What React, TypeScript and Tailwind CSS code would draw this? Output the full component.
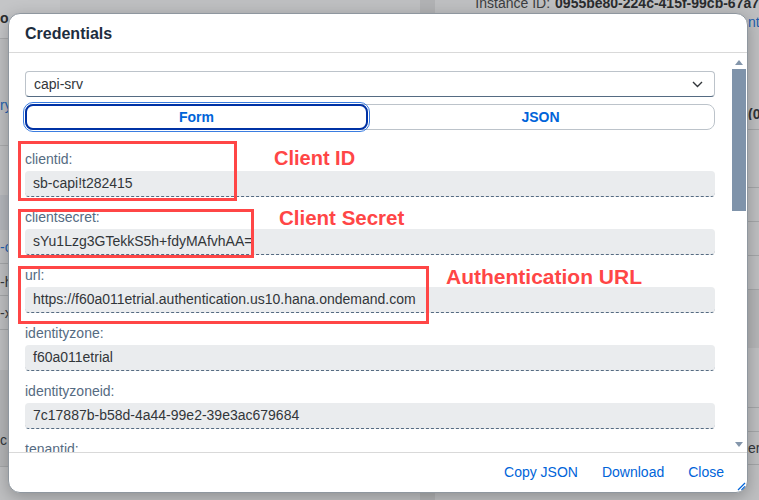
import React from "react";

const fields = [
  { label: "clientid:", value: "sb-capi!t282415" },
  { label: "clientsecret:", value: "sYu1Lzg3GTekkS5h+fdyMAfvhAA=" },
  { label: "url:", value: "https://f60a011etrial.authentication.us10.hana.ondemand.com" },
  { label: "identityzone:", value: "f60a011etrial" },
  { label: "identityzoneid:", value: "7c17887b-b58d-4a44-99e2-39e3ac679684" },
  { label: "tenantid:", value: "f60a011etrial" },
];

function Annotation({ index }: { index: number }) {
  if (index === 0)
    return (
      <>
        <div className="absolute left-[-7px] top-[-10px] w-[219px] h-[60px] border-[3px] border-[#ff4646] pointer-events-none" />
        <span className="absolute left-[249px] top-[-5px] text-[20px] leading-6 font-bold text-[#ff4646]">Client ID</span>
      </>
    );
  if (index === 1)
    return (
      <>
        <div className="absolute left-[-7px] top-0 w-[236px] h-[49px] border-[3px] border-[#ff4646] pointer-events-none" />
        <span className="absolute left-[254px] top-[-3px] text-[20.5px] leading-6 font-bold text-[#ff4646]">Client Secret</span>
      </>
    );
  if (index === 2)
    return (
      <>
        <div className="absolute left-[-7px] top-[-1px] w-[411px] h-[58px] border-[3px] border-[#ff4646] pointer-events-none" />
        <span className="absolute left-[421px] top-[-2px] text-[21px] leading-6 font-bold text-[#ff4646]">Authentication URL</span>
      </>
    );
  return null;
}

function Field({ label, value, index }: { label: string; value: string; index: number }) {
  return (
    <div className="relative flex flex-col">
      <span className="h-4 text-[14px] leading-4 text-[#556b82]">{label}</span>
      <div className="mt-1 h-[26px] flex items-center px-2 bg-[#eaecee] rounded-[4px] border-b border-dashed border-[#556b82] text-[14px] text-[#32363a]">
        {value}
      </div>
      <Annotation index={index} />
    </div>
  );
}

function Background() {
  return (
    <div className="flex h-full text-[14px] text-[#32363a]">
      <div className="w-[60px] flex flex-col">
        <div className="h-[38px] bg-[#c4c5c7] pt-[8px] font-bold text-[#2a2c2e]">o</div>
        <div className="h-[107px] border-t border-[#a9abad] pt-[56px] text-[#1f5fae]">ry</div>
        <div className="h-[50px] border-t border-[#a9abad]" />
        <div className="h-[35px] bg-[#b3b6bb]" />
        <div className="h-[34px] border-b border-[#a4a6a8] pt-[7px] text-[#1f5fae]">-c</div>
        <div className="h-[32px] border-b border-[#a4a6a8] pt-[8px]">-h</div>
        <div className="h-[34px] border-b border-[#a4a6a8] pt-[7px]">-x</div>
        <div className="h-[40px]" />
        <div className="h-[96px] bg-[#b4b5b7] pt-[60px]">c</div>
        <div className="flex-1 border-t border-[#a4a6a8] pl-[35px]">
          <div className="w-[55px] h-3 rounded-t-full bg-[#2f6b3e]" />
        </div>
      </div>
      <div className="flex-1" />
      <div className="w-[339px] flex">
        <div className="w-[17px] bg-[#b1b2b4]" />
        <div className="flex-1 flex flex-col">
          <div className="h-[17px] mt-[-5px] pl-[40px] leading-4 text-[14px] text-[#3b3d40] whitespace-nowrap">
            Instance ID:<span className="ml-[5px] font-bold text-[#2a2c2e]">0955be80-224c-415f-99cb-67a7</span>
          </div>
          <div className="h-[92px] flex justify-end text-[#1f5fae] whitespace-nowrap">
            <span className="w-[11px] overflow-hidden">nt</span>
          </div>
          <div className="h-[16px] flex justify-end font-bold whitespace-nowrap">
            <span className="w-[11px] overflow-hidden">(0</span>
          </div>
          <div className="h-[10px] border-b border-[#a4a6a8]" />
          <div className="h-[58px] border-b border-[#a4a6a8]" />
          <div className="h-[34px] border-b border-[#a4a6a8]" />
          <div className="h-[34px] border-b border-[#a4a6a8]" />
          <div className="h-[34px] border-b border-[#a4a6a8]" />
          <div className="h-[58px] bg-[#b4b5b7]" />
          <div className="h-[60px] border-b border-[#a4a6a8]" />
          <div className="h-[24px] border-b border-[#a4a6a8]" />
          <div className="h-[33px] flex justify-end items-center border-b border-[#a4a6a8] whitespace-nowrap">
            <span className="w-[11px] overflow-hidden">er</span>
          </div>
        </div>
      </div>
    </div>
  );
}

export default function App() {
  return (
    <div
      className="relative w-[759px] h-[500px] overflow-hidden bg-[#bebfc1]"
      style={{ fontFamily: '"Liberation Sans", Arial, sans-serif' }}
    >
      <Background />

      <div className="absolute left-[8px] top-[13px] w-[740px] h-[480px] flex flex-col bg-white rounded-[12px] border border-[#8f979f] shadow-[0_4px_16px_rgba(0,0,0,0.25)] overflow-hidden">
        {/* Header */}
        <div className="h-[39px] shrink-0 flex items-center px-4 border-b border-[#d9d9d9]">
          <h1 className="text-[16px] font-bold text-[#1d2d3e] pt-[1px]">Credentials</h1>
        </div>

        {/* Content */}
        <div className="flex-1 flex min-h-0">
          <div className="flex-1 min-h-0 overflow-hidden pl-4 pr-[17px] pt-[18px]">
            <div className="h-[26px] flex items-center justify-between px-2 rounded-[4px] border border-[#bcc3ca] border-b-[#556b82] text-[14px] text-[#32363a]">
              <span>capi-srv</span>
              <svg width="11" height="7" viewBox="0 0 11 7" className="mr-[3px]">
                <polyline points="1,1 5.5,5.5 10,1" fill="none" stroke="#32363a" strokeWidth="1.4" />
              </svg>
            </div>

            <div className="mt-[7px] h-[26px] flex rounded-[8px] border border-[#bcc3ca] text-[14px] font-bold text-[#0064d9]">
              <button className="w-[343px] -m-px flex items-center justify-center rounded-[8px] border-2 border-[#0032a5] outline outline-1 outline-offset-1 outline-[#3b7de0]">
                Form
              </button>
              <button className="flex-1 flex items-center justify-center">JSON</button>
            </div>

            <div className="mt-[21px] flex flex-col gap-3">
              {fields.map((f, i) => (
                <Field key={f.label} label={f.label} value={f.value} index={i} />
              ))}
            </div>
          </div>

          {/* Scrollbar */}
          <div className="w-[14px] mr-[1px] flex flex-col items-center pt-[7px] pb-[5px]">
            <svg width="8" height="5" viewBox="0 0 8 5">
              <polygon points="0,5 4,0 8,5" fill="#8496ab" />
            </svg>
            <div className="mt-[4px] w-full h-[142px] bg-[#7f93aa]" />
            <div className="flex-1" />
            <svg width="8" height="5" viewBox="0 0 8 5">
              <polygon points="0,0 8,0 4,5" fill="#8496ab" />
            </svg>
          </div>
        </div>

        {/* Footer */}
        <div className="relative h-[40px] shrink-0 flex items-center justify-end gap-6 pr-[23px] border-t border-[#d9d9d9] text-[14px] text-[#0064d9]">
          <button>Copy JSON</button>
          <button>Download</button>
          <button>Close</button>
          <svg width="9" height="9" viewBox="0 0 9 9" className="absolute right-[1px] bottom-[1px]">
            <line x1="1" y1="8" x2="8" y2="1" stroke="#0064d9" strokeWidth="1.2" />
            <line x1="4.5" y1="8" x2="8" y2="4.5" stroke="#0064d9" strokeWidth="1.2" />
          </svg>
        </div>
      </div>
    </div>
  );
}
